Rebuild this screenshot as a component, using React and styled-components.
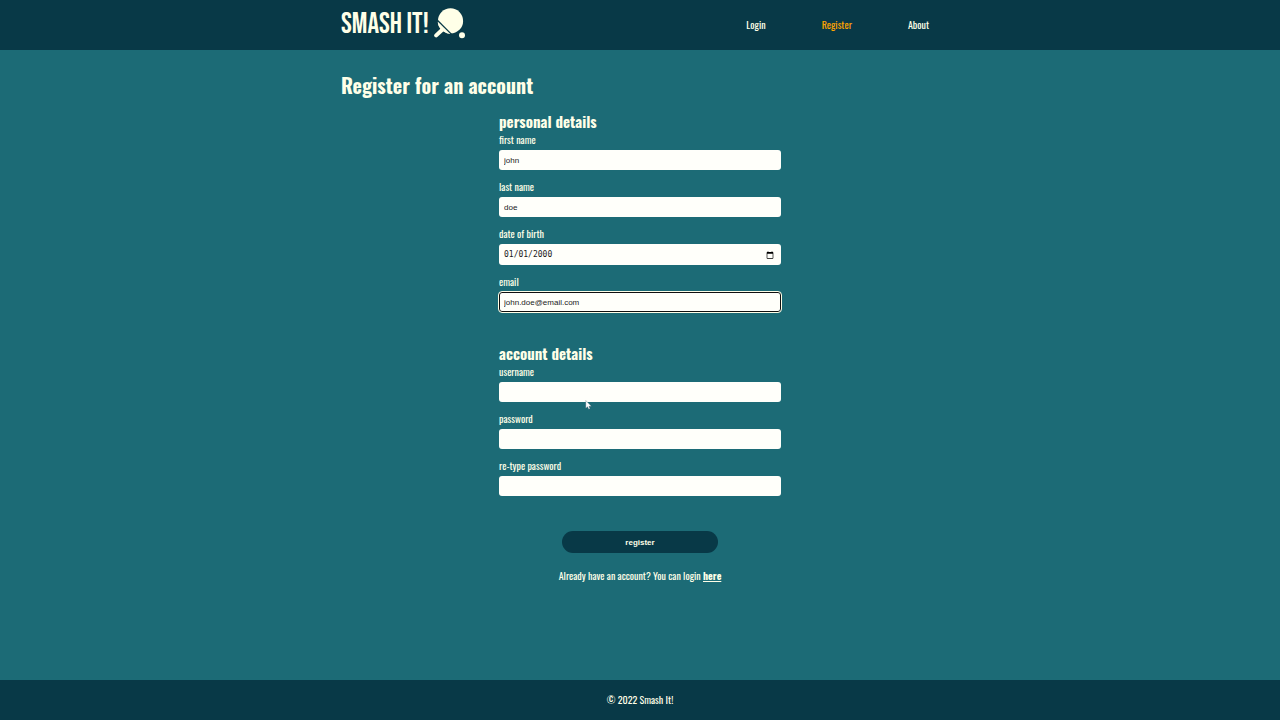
import React from "react";
import styled, { createGlobalStyle, css } from "styled-components";

const Global = createGlobalStyle`
  * { box-sizing: border-box; }
  body { margin: 0; }
`;

const color = {
  deep: "#083947",
  base: "#1c6b76",
  light: "#ffffe8",
  field: "#fffffa",
  accent: "#ffa500",
  ink: "#1a1a1a",
};

const Page = styled.div`
  min-height: 100vh;
  display: flex;
  flex-direction: column;
  background: ${color.base};
  color: ${color.light};
  font: 10px/16px Oswald, "Roboto Condensed", "Liberation Sans Narrow", sans-serif;
`;

const Header = styled.header`
  background: ${color.deep};
`;

const Bar = styled.div`
  width: 100%;
  max-width: 598px;
  min-height: 50px;
  margin: 0 auto;
  display: flex;
  align-items: center;
  justify-content: space-between;
`;

const Logo = styled.a`
  display: flex;
  align-items: flex-end;
  gap: 5px;
  padding-bottom: 3px;
  color: inherit;
  text-decoration: none;
  font-family: "Bebas Neue", Oswald, sans-serif;
  font-size: 29px;
  line-height: 28px;
`;

const Nav = styled.nav`
  display: flex;
  gap: 56px;
  padding-right: 10px;
`;

const NavLink = styled.a`
  color: ${(p) => (p.$active ? color.accent : "inherit")};
  text-decoration: none;
`;

const Main = styled.main`
  flex: 1;
  width: 100%;
  max-width: 598px;
  margin: 0 auto;
  padding: 20px 0;
`;

const Title = styled.h1`
  margin: 0;
  font-size: 20px;
  line-height: 30px;
`;

const Form = styled.form`
  width: 282px;
  max-width: 100%;
  margin: 10px auto 0;
`;

const Group = styled.fieldset`
  border: 0;
  margin: 0 0 21px;
  padding: 0;
  min-width: 0;
`;

const Legend = styled.legend`
  padding: 0;
  font-size: 15px;
  line-height: 22px;
  font-weight: 700;
`;

const Row = styled.div`
  position: relative;
  margin-bottom: 9px;
`;

const Label = styled.label`
  display: block;
  margin-bottom: 2px;
`;

const Input = styled.input`
  display: block;
  width: 100%;
  height: 20px;
  padding: 0 5px;
  border: 0;
  border-radius: 3px;
  background: ${color.field};
  color: ${color.ink};
  font: 8px "Liberation Sans", Arial, sans-serif;
  outline: none;

  &[type="date"] {
    height: 21px;
    font-family: "DejaVu Sans Mono", monospace;
  }

  &::-webkit-datetime-edit-month-field,
  &::-webkit-datetime-edit-day-field,
  &::-webkit-datetime-edit-year-field {
    padding: 0;
  }

  ${(p) =>
    p.$focused &&
    css`
      outline: 1px solid ${color.light};
      box-shadow: inset 0 0 0 1px #101010;
    `}
`;

const Submit = styled.button`
  display: block;
  width: 156px;
  height: 22px;
  margin: 26px auto 15px;
  border: 0;
  border-radius: 11px;
  background: ${color.deep};
  color: ${color.light};
  font: 700 8px "Liberation Sans", Arial, sans-serif;
`;

const Hint = styled.p`
  margin: 0;
  text-align: center;
`;

const HintLink = styled.a`
  color: inherit;
  font-weight: 700;
`;

const Footer = styled.footer`
  padding: 12px;
  background: ${color.deep};
  text-align: center;
`;

const Pointer = styled.svg`
  position: absolute;
  left: 86px;
  bottom: -8px;
`;

function Paddle() {
  return (
    <svg width="32" height="31" viewBox="0 0 32 31" aria-hidden="true">
      <circle cx="16.5" cy="12.9" r="12.6" fill="currentColor" />
      <path d="M3.6 14Q4 18 6.6 21L10 23.7Q13 26 17 26z" fill="currentColor" />
      <path d="M8.5 21.5 2.2 27.4" stroke="currentColor" strokeWidth="4" strokeLinecap="round" />
      <path d="M3.4 12.2 17.6 26.4" stroke={color.deep} strokeWidth="1.3" />
      <circle cx="28" cy="27.2" r="3" fill="currentColor" />
    </svg>
  );
}

function Field({ id, label, children, ...input }) {
  return (
    <Row>
      <Label htmlFor={id}>{label}</Label>
      <Input id={id} name={id} {...input} />
      {children}
    </Row>
  );
}

export default function App() {
  return (
    <Page>
      <Global />
      <Header>
        <Bar>
          <Logo href="#">
            SMASH IT!
            <Paddle />
          </Logo>
          <Nav>
            <NavLink href="#login">Login</NavLink>
            <NavLink href="#register" $active>Register</NavLink>
            <NavLink href="#about">About</NavLink>
          </Nav>
        </Bar>
      </Header>
      <Main>
        <Title>Register for an account</Title>
        <Form onSubmit={(e) => e.preventDefault()}>
          <Group>
            <Legend>personal details</Legend>
            <Field id="first-name" label="first name" defaultValue="john" />
            <Field id="last-name" label="last name" defaultValue="doe" />
            <Field id="birth" label="date of birth" type="date" defaultValue="2000-01-01" />
            <Field id="email" label="email" type="email" defaultValue="john.doe@email.com" $focused />
          </Group>
          <Group>
            <Legend>account details</Legend>
            <Field id="username" label="username">
              <Pointer width="7" height="10" viewBox="0 0 7 10" aria-hidden="true">
                <path d="M.8.5v7.8l1.8-1.6 1.1 2.6 1.3-.5-1.1-2.5h2.5z" fill="#fff" stroke="#456" strokeWidth=".3" />
              </Pointer>
            </Field>
            <Field id="password" label="password" type="password" />
            <Field id="password-again" label="re-type password" type="password" />
          </Group>
          <Submit>register</Submit>
          <Hint>
            Already have an account? You can login <HintLink href="#login">here</HintLink>
          </Hint>
        </Form>
      </Main>
      <Footer>© 2022 Smash It!</Footer>
    </Page>
  );
}
